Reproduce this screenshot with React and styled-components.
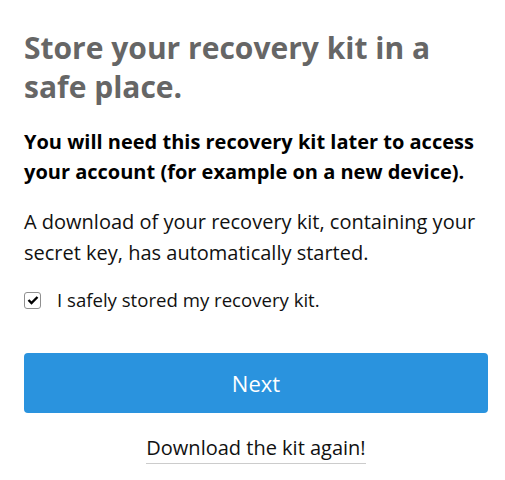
import React, { useState } from "react";
import styled, { createGlobalStyle } from "styled-components";

const Global = createGlobalStyle`
  body {
    margin: 0;
    background: #fff;
    font-family: "Open Sans", "Liberation Sans", sans-serif;
  }
`;

const Page = styled.div`
  width: 464px;
  padding: 28px 17px 24px 24px;
  display: flex;
  flex-direction: column;
`;

const Title = styled.h1`
  margin: 0;
  font-size: 30px;
  line-height: 39px;
  font-weight: 700;
  color: #666;
`;

const Lead = styled.p`
  margin: 21px 0 0;
  font-size: 20px;
  line-height: 30px;
  font-weight: 700;
  color: #000;
`;

const Text = styled.p`
  margin: 19px 0 0;
  font-size: 20px;
  line-height: 31px;
  color: #111;
`;

const CheckRow = styled.label`
  margin-top: 17px;
  display: flex;
  align-items: center;
  gap: 16px;
  font-size: 18.6px;
  line-height: 30px;
  color: #111;
  cursor: pointer;
`;

const Box = styled.span`
  width: 17px;
  height: 17px;
  box-sizing: border-box;
  border: 1px solid #8f8f8f;
  border-radius: 3px;
  background: #fff;
  display: flex;
  align-items: center;
  justify-content: center;
`;

const NextButton = styled.button`
  margin-top: 38px;
  height: 60px;
  border: none;
  border-radius: 4px;
  background: #2a93de;
  color: #fff;
  font-family: inherit;
  font-size: 22px;
`;

const Links = styled.div`
  margin-top: 20px;
  display: flex;
  justify-content: center;
`;

const AgainLink = styled.a`
  font-size: 20px;
  line-height: 30px;
  color: #111;
  text-decoration: none;
  border-bottom: 1px solid #ccc;
`;

export default function App() {
  const [checked, setChecked] = useState(true);
  return (
    <>
      <Global />
      <Page>
        <Title>Store your recovery kit in a safe place.</Title>
        <Lead>
          You will need this recovery kit later to access your account (for
          example on a new device).
        </Lead>
        <Text>
          A download of your recovery kit, containing your secret key, has
          automatically started.
        </Text>
        <CheckRow onClick={() => setChecked(!checked)}>
          <Box>
            {checked && (
              <svg width="12" height="10" viewBox="0 0 12 10">
                <path
                  d="M1.5 5 L4.5 8 L10.5 2"
                  fill="none"
                  stroke="#000"
                  strokeWidth="2.4"
                />
              </svg>
            )}
          </Box>
          I safely stored my recovery kit.
        </CheckRow>
        <NextButton>Next</NextButton>
        <Links>
          <AgainLink href="#">Download the kit again!</AgainLink>
        </Links>
      </Page>
    </>
  );
}
